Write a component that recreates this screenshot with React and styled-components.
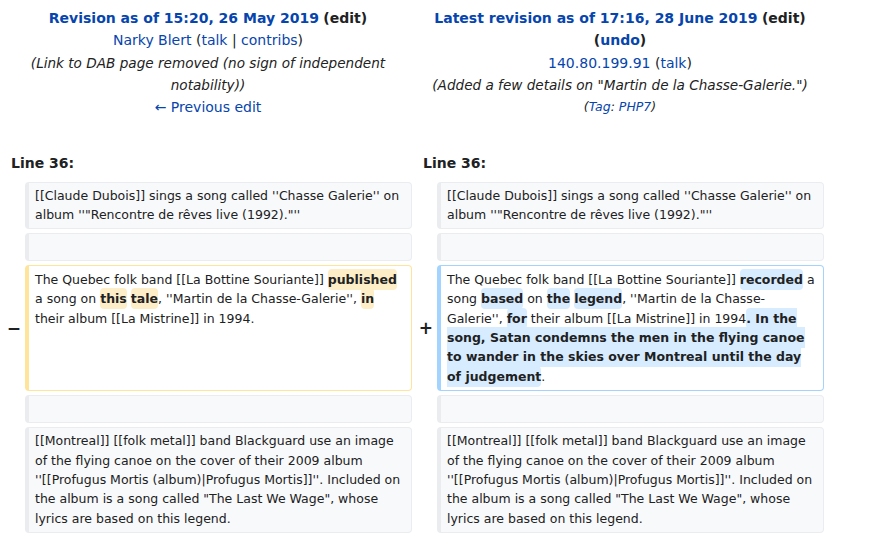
import React from 'react';
import styled, { createGlobalStyle } from 'styled-components';

const GlobalStyle = createGlobalStyle`
    body {
        margin: 0;
        background: #ffffff;
        font-family: "DejaVu Sans", sans-serif;
        color: #202122;
    }
`

const DiffTable = styled.table`
    width: 828px;
    border-collapse: separate;
    border-spacing: 4px;
    table-layout: fixed;
    font-size: 14px;
    line-height: 1.6;
`

const MarkerCol = styled.col`
    width: 17px;
`

const ContentCol = styled.col`
    width: 387px;
`

const Header = styled.td`
    text-align: center;
    vertical-align: top;
    padding: 3px 0 0 0;
`

const HeadLine = styled.div`
    white-space: nowrap;
`

const Title = styled.a`
    font-weight: bold;
    color: #0645ad;
    text-decoration: none;
`

const Bold = styled.span`
    font-weight: bold;
`

const Link = styled.a`
    color: #0645ad;
    text-decoration: none;
`

const Comment = styled.div`
    font-style: italic;
    font-size: 13.6px;
    line-height: 22px;
    color: #222222;
    padding: 0 6px;
`

const Tag = styled.div`
    font-style: italic;
    font-size: 12.5px;
    color: #222222;
    line-height: 22px;
`

const LineNo = styled.td`
    font-weight: bold;
    padding: 30px 7px 3px;
`

const Marker = styled.td`
    text-align: right;
    font-weight: bold;
    font-size: 17px;
    line-height: 1.2;
    padding: 0 0 0 2px;
`

const Content = styled.td`
    vertical-align: top;
    font-size: 12.5px;
    line-height: 19.4px;
    padding: 3.4px 6px;
    border: 1px solid ${p => p.$tone === 'del' ? '#ffe49c' : p.$tone === 'add' ? '#a3d3ff' : '#eaecf0'};
    border-left-width: 4px;
    border-radius: 4px;
    background: ${p => p.$tone ? '#ffffff' : '#f8f9fa'};
`

const Change = styled.span`
    font-weight: bold;
    border-radius: 4px;
    padding: 3px 0;
    background: ${p => p.$tone === 'del' ? '#feeec8' : '#d8ecff'};
`

const App = () => {
    return (
        <>
            <GlobalStyle />
            <DiffTable>
                <colgroup>
                    <MarkerCol />
                    <ContentCol />
                    <MarkerCol />
                    <ContentCol />
                </colgroup>
                <tbody>
                    <tr>
                        <Header colSpan={2}>
                            <HeadLine>
                                <Title href="#">Revision as of 15:20, 26 May 2019</Title> <Bold>(edit)</Bold>
                            </HeadLine>
                            <HeadLine>
                                <Link href="#">Narky Blert</Link> (<Link href="#">talk</Link> | <Link href="#">contribs</Link>)
                            </HeadLine>
                            <Comment>(Link to DAB page removed (no sign of independent notability))</Comment>
                            <HeadLine>
                                <Link href="#">← Previous edit</Link>
                            </HeadLine>
                        </Header>
                        <Header colSpan={2}>
                            <HeadLine>
                                <Title href="#">Latest revision as of 17:16, 28 June 2019</Title> <Bold>(edit)</Bold>
                            </HeadLine>
                            <HeadLine>
                                <Bold>(<Link href="#">undo</Link>)</Bold>
                            </HeadLine>
                            <HeadLine>
                                <Link href="#">140.80.199.91</Link> (<Link href="#">talk</Link>)
                            </HeadLine>
                            <Comment>(Added a few details on "Martin de la Chasse-Galerie.")</Comment>
                            <Tag>(<Link href="#">Tag</Link>: <Link href="#">PHP7</Link>)</Tag>
                        </Header>
                    </tr>
                    <tr>
                        <LineNo colSpan={2}>Line 36:</LineNo>
                        <LineNo colSpan={2}>Line 36:</LineNo>
                    </tr>
                    <tr>
                        <Marker />
                        <Content>[[Claude Dubois]] sings a song called ''Chasse Galerie'' on album ''"Rencontre de rêves live (1992)."''</Content>
                        <Marker />
                        <Content>[[Claude Dubois]] sings a song called ''Chasse Galerie'' on album ''"Rencontre de rêves live (1992)."''</Content>
                    </tr>
                    <tr>
                        <Marker />
                        <Content>{'\u00a0'}</Content>
                        <Marker />
                        <Content>{'\u00a0'}</Content>
                    </tr>
                    <tr>
                        <Marker>−</Marker>
                        <Content $tone="del">
                            The Quebec folk band [[La Bottine Souriante]] <Change $tone="del">published</Change> a song on <Change $tone="del">this</Change> <Change $tone="del">tale</Change>, ''Martin de la Chasse-Galerie'', <Change $tone="del">in</Change> their album [[La Mistrine]] in 1994.
                        </Content>
                        <Marker>+</Marker>
                        <Content $tone="add">
                            The Quebec folk band [[La Bottine Souriante]] <Change>recorded</Change> a song <Change>based</Change> on <Change>the</Change> <Change>legend</Change>, ''Martin de la Chasse-Galerie'', <Change>for</Change> their album [[La Mistrine]] in 1994<Change>. In the song, Satan condemns the men in the flying canoe to wander in the skies over Montreal until the day of judgement</Change>.
                        </Content>
                    </tr>
                    <tr>
                        <Marker />
                        <Content>{'\u00a0'}</Content>
                        <Marker />
                        <Content>{'\u00a0'}</Content>
                    </tr>
                    <tr>
                        <Marker />
                        <Content>[[Montreal]] [[folk metal]] band Blackguard use an image of the flying canoe on the cover of their 2009 album ''[[Profugus Mortis (album)|Profugus Mortis]]''. Included on the album is a song called "The Last We Wage", whose lyrics are based on this legend.</Content>
                        <Marker />
                        <Content>[[Montreal]] [[folk metal]] band Blackguard use an image of the flying canoe on the cover of their 2009 album ''[[Profugus Mortis (album)|Profugus Mortis]]''. Included on the album is a song called "The Last We Wage", whose lyrics are based on this legend.</Content>
                    </tr>
                </tbody>
            </DiffTable>
        </>
    );
}

export default App;
